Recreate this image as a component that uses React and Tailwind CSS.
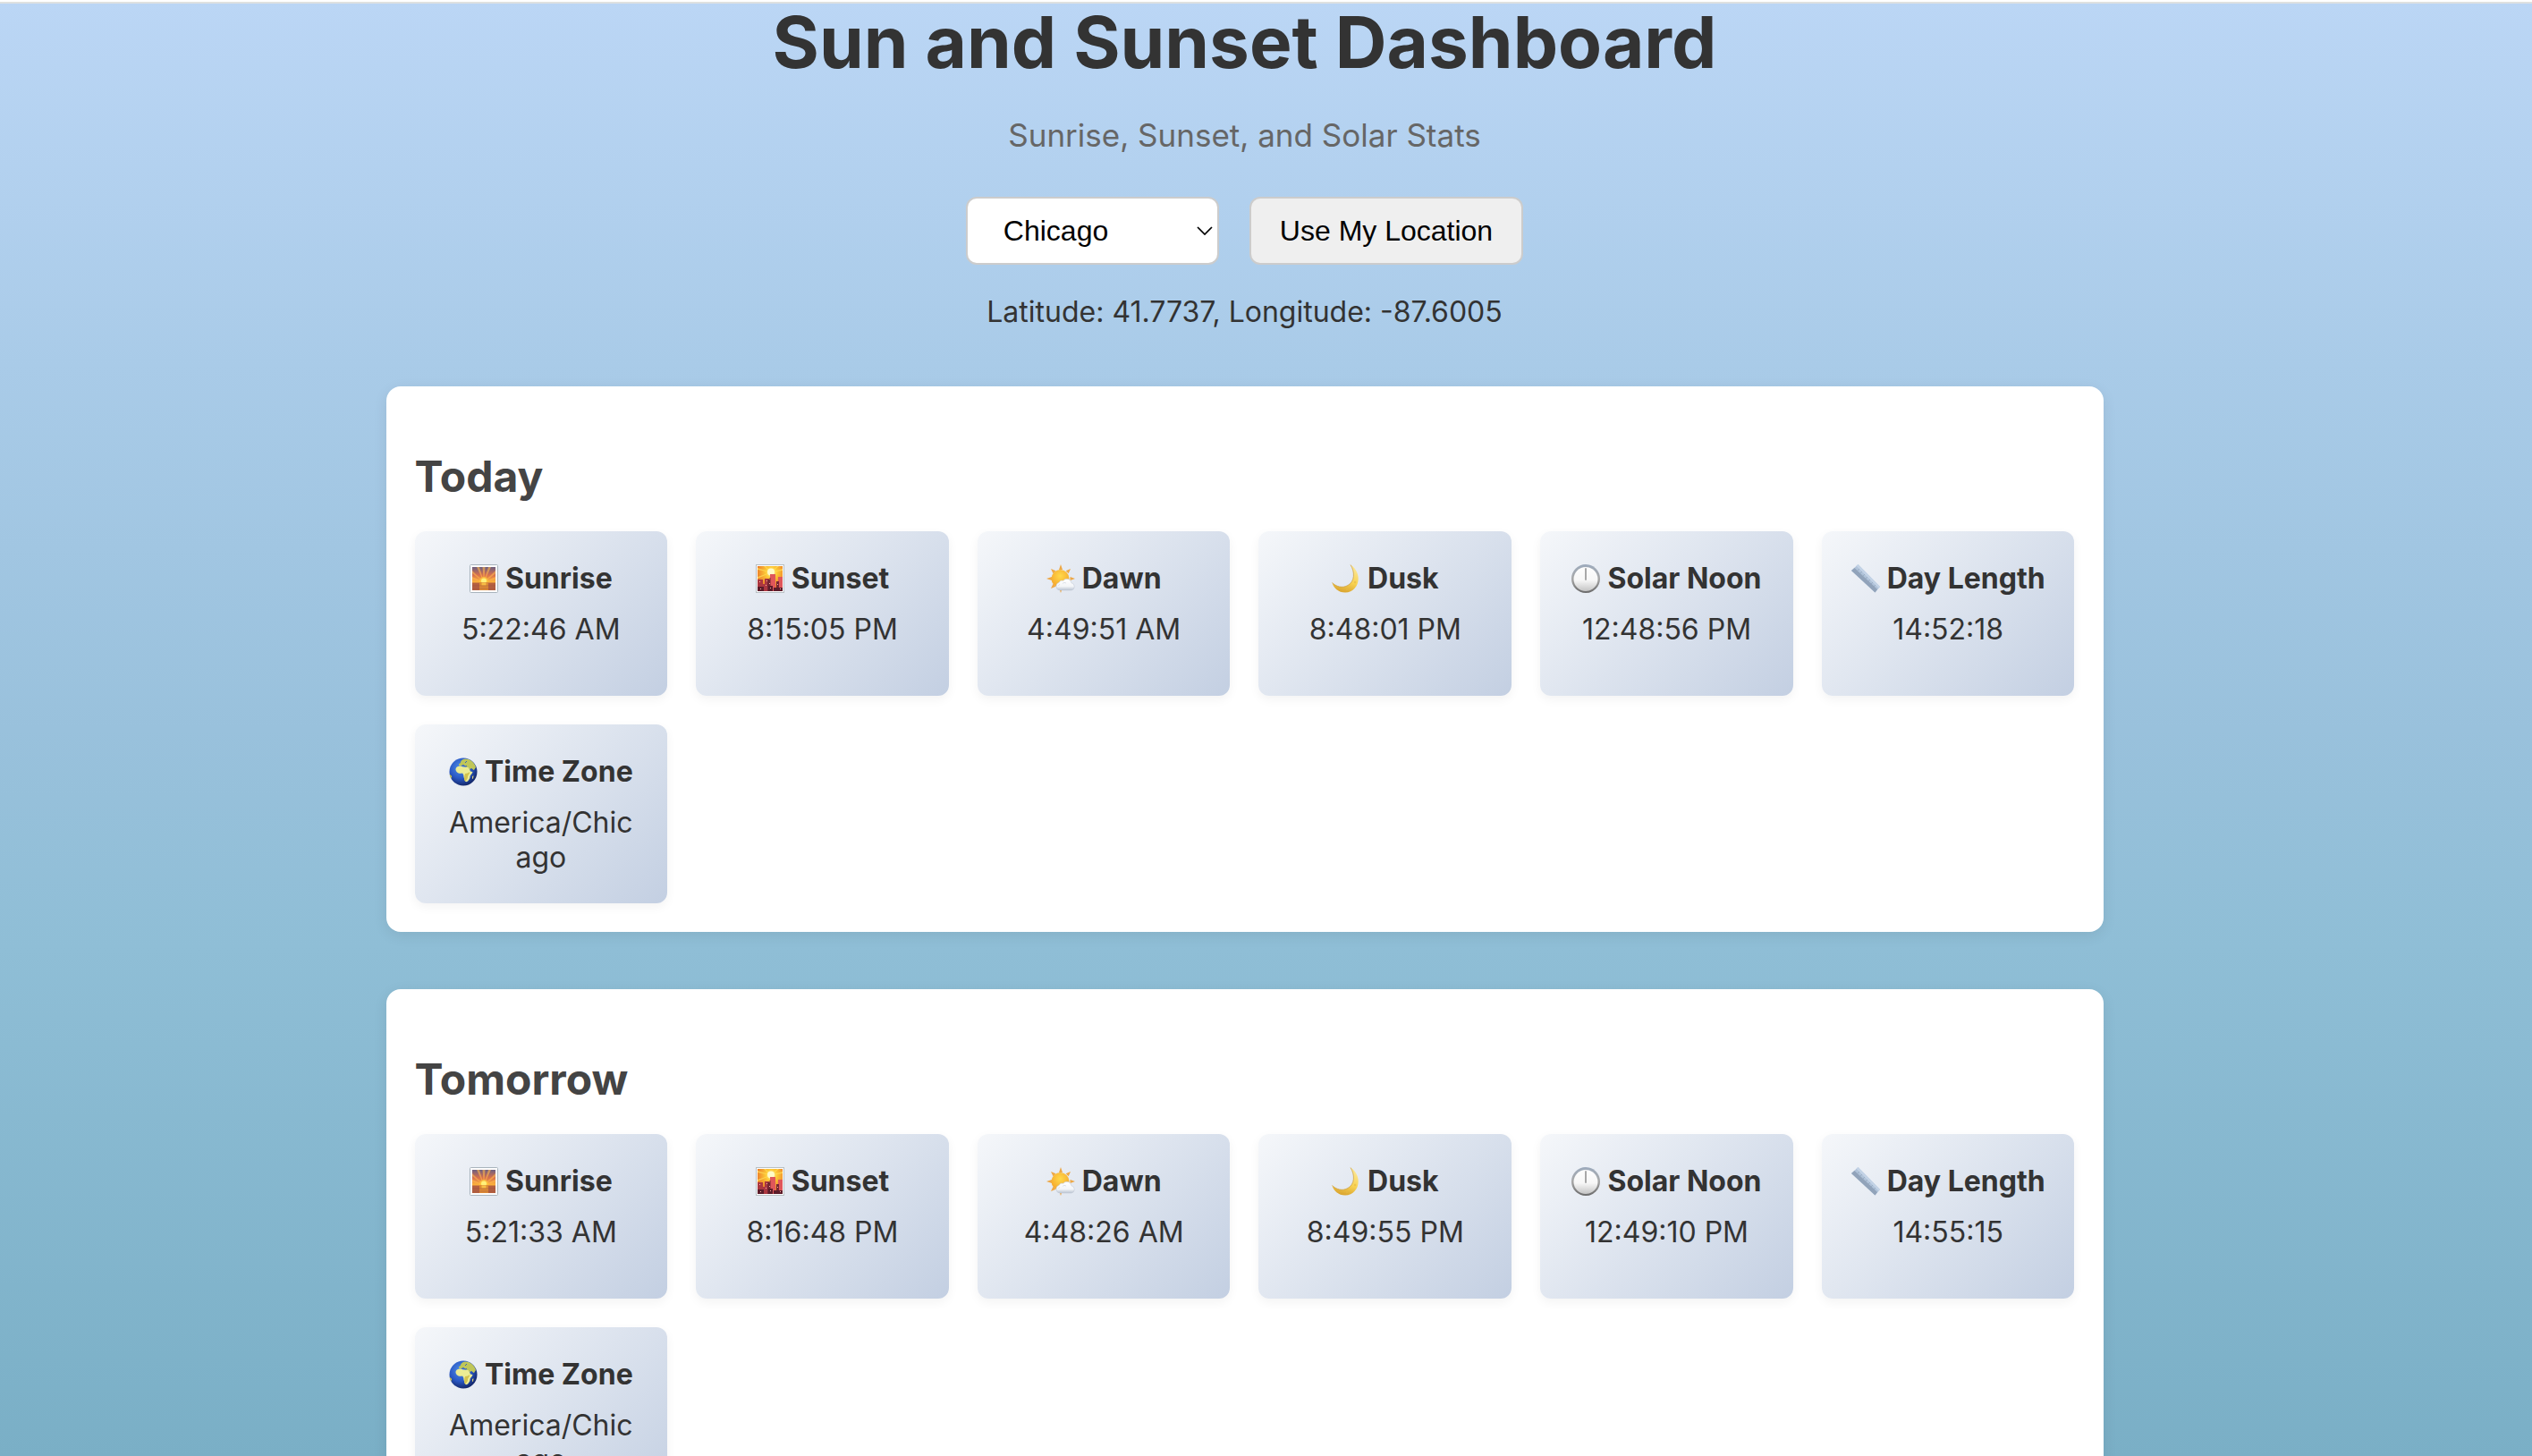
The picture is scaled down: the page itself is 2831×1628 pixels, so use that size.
import { useId } from "react";

function SunriseIcon() {
  const id = useId();
  return (
    <svg viewBox="0 0 32 32" className="size-8 shrink-0" aria-hidden="true">
      <defs>
        <linearGradient id={id} x1="0" y1="0" x2="0" y2="1">
          <stop offset="0" stopColor="#6d5f80" />
          <stop offset="0.35" stopColor="#d9704c" />
          <stop offset="0.62" stopColor="#fbb03c" />
        </linearGradient>
      </defs>
      <rect x="0.5" y="0.5" width="31" height="31" rx="1" fill="#fdfdfd" stroke="#a9b4bd" />
      <rect x="3" y="3" width="26" height="26" fill={`url(#${id})`} />
      <path d="M16 20 3 7v3zM16 20 8 3h3zM16 20 14.500 3h3zM16 20 21 3h3zM16 20 29 7v3.500zM16 20 3 14v2.500zM16 20 29 14v2.500z" fill="#ffb74d" opacity="0.6" />
      <circle cx="16" cy="19" r="5" fill="#ffc93d" opacity="0.7" />
      <circle cx="16" cy="18.500" r="3" fill="#fff07a" />
      <rect x="3" y="20.500" width="26" height="8.500" fill="#b5603f" />
      <rect x="11" y="20.500" width="10" height="8.500" fill="#dd8a35" />
      <rect x="13.500" y="20.500" width="5" height="3" fill="#f7bd45" />
      <path d="M3 24h26M3 27h26" stroke="#8f4b46" strokeWidth="0.700" opacity="0.5" />
    </svg>
  );
}

function SunsetIcon() {
  const id = useId();
  return (
    <svg viewBox="0 0 32 32" className="size-8 shrink-0" aria-hidden="true">
      <defs>
        <radialGradient id={id} cx="0.55" cy="0.25" r="0.75">
          <stop offset="0" stopColor="#fff9b0" />
          <stop offset="0.3" stopColor="#fdc936" />
          <stop offset="1" stopColor="#e35a24" />
        </radialGradient>
      </defs>
      <rect x="0.5" y="0.5" width="31" height="31" fill="#fdfdfd" stroke="#b8c0c4" />
      <rect x="2" y="2" width="28" height="28" fill={`url(#${id})`} />
      <path d="m17 9-15-5v2zM17 9 9 2h2zM17 9l7-7h2zM17 9l13-4v2zM17 9 2 14v2z" fill="#ffe15a" opacity="0.7" />
      <circle cx="17" cy="8.500" r="4" fill="#fffbc8" />
      <path d="M16 30V11h6v19zM25 30V14h5v16z" fill="#e0575a" />
      <path d="M2 30V17h6v5h2v-6h5v14z" fill="#ab3740" />
      <path d="M13 30V17h2.500v-2h1v15zM23 30V19h3v11z" fill="#762633" />
      <path d="M2 25h7v5H2zM14 24h5v6h-5zM20 26h10v4H20z" fill="#5c1c2a" />
      <path d="M4 19h1v1H4zM12 18h1v1h-1zM5 27h1v1H5zM15 21h1v1h-1zM16 26h1v1h-1zM24 22h1v1h-1zM27 27h1v1h-1zM11 23h1v1h-1z" fill="#f9b1a0" />
    </svg>
  );
}

function DawnIcon() {
  const id = useId();
  return (
    <svg viewBox="0 0 32 32" className="size-8 shrink-0" aria-hidden="true">
      <defs>
        <radialGradient id={id + "s"} cx="0.5" cy="0.35" r="0.65">
          <stop offset="0" stopColor="#ffd94a" />
          <stop offset="1" stopColor="#f5a52a" />
        </radialGradient>
        <linearGradient id={id + "c"} x1="0" y1="0" x2="0" y2="1">
          <stop offset="0" stopColor="#ffffff" />
          <stop offset="0.65" stopColor="#f3f5f8" />
          <stop offset="1" stopColor="#b9c3d1" />
        </linearGradient>
      </defs>
      <path
        d="m16 0 2 6h-4zM5 5l5.500 2.300-3 3zM0 16l6-2v4zM5 27l2.500-5.300 3 3zM27 5l-2.300 5.300-3-3zM32 16l-5.500 2v-4zM16 32l-2-6h4z"
        fill="#eda847"
      />
      <circle cx="15.500" cy="16" r="10" fill={`url(#${id}s)`} />
      <path d="M15 29a4.500 4.500 0 0 1-.8-8.800 3.700 3.700 0 0 1 4.600-2 5.200 5.200 0 0 1 9.200 2.600A4.200 4.200 0 0 1 28 29z" fill={`url(#${id}c)`} stroke="#c3cbd6" strokeWidth="0.600" />
      <path d="M18 21.500a3 3 0 0 1 4-.5M13 24a3 3 0 0 1 2-1.500" fill="none" stroke="#d4dae3" strokeWidth="0.800" />
    </svg>
  );
}

function DuskIcon() {
  const id = useId();
  return (
    <svg viewBox="0 0 32 32" className="size-8 shrink-0" aria-hidden="true">
      <defs>
        <linearGradient id={id} x1="0.8" y1="0.2" x2="0.6" y2="1">
          <stop offset="0" stopColor="#fbe38a" />
          <stop offset="0.55" stopColor="#f8d252" />
          <stop offset="1" stopColor="#dca832" />
        </linearGradient>
      </defs>
      <path d="M21 0.500c15 10 9 31-6 31C7.500 31.500 2 26.500 .5 20.500 5 25 12 27 18 23.500c8-4.500 8-15 3-23z" fill={`url(#${id})`} />
      <path d="M.5 20.500C5 25 12 27 18 23.500c8-4.500 8-15 3-23" fill="none" stroke="#c99b3b" strokeWidth="0.700" />
      <circle cx="26" cy="20" r="1.200" fill="#e6b843" opacity="0.6" />
      <circle cx="17" cy="28" r="1.200" fill="#e6b843" opacity="0.6" />
    </svg>
  );
}

function NoonIcon() {
  const id = useId();
  return (
    <svg viewBox="0 0 32 32" className="size-8 shrink-0" aria-hidden="true">
      <defs>
        <linearGradient id={id + "r"} x1="0" y1="0" x2="0" y2="1">
          <stop offset="0" stopColor="#9dabbd" />
          <stop offset="0.5" stopColor="#a8a8a8" />
          <stop offset="1" stopColor="#6a6a6a" />
        </linearGradient>
        <linearGradient id={id + "f"} x1="0" y1="0" x2="0" y2="1">
          <stop offset="0" stopColor="#fdfdfd" />
          <stop offset="0.55" stopColor="#f7f7f7" />
          <stop offset="1" stopColor="#c4c4c4" />
        </linearGradient>
      </defs>
      <circle cx="16" cy="16" r="16" fill={`url(#${id}r)`} />
      <circle cx="16" cy="16.500" r="13.500" fill={`url(#${id}f)`} />
      <path d="M16 5v12" stroke="#a8a8a8" strokeWidth="2" strokeLinecap="round" />
    </svg>
  );
}

function LengthIcon() {
  return (
    <svg viewBox="0 0 32 32" className="size-8 shrink-0" aria-hidden="true">
      <path d="M7.500 0 32 25l-5.500 6.500L0 7z" fill="#b0c3d9" />
      <path d="M3.500 4 0 7l26.500 24.500 2.500-3.500z" fill="#91a3ba" />
      <path d="M7.500 0 32 25l-1.500 1.800L5.500 1.800z" fill="#c3d3e6" />
      <path d="m9 5-2 2M12 8l-2 2M15 11l-2 2M18 14l-2 2M21 17l-2 2M24 20l-2 2M27 23l-2 2" stroke="#8a9db5" strokeWidth="0.600" />
    </svg>
  );
}

function ZoneIcon() {
  const id = useId();
  return (
    <svg viewBox="0 0 32 32" className="size-8 shrink-0" aria-hidden="true">
      <defs>
        <radialGradient id={id + "o"} cx="0.4" cy="0.35" r="0.65">
          <stop offset="0" stopColor="#4f8fe8" />
          <stop offset="0.6" stopColor="#2a58c4" />
          <stop offset="1" stopColor="#152a6e" />
        </radialGradient>
        <clipPath id={id + "c"}>
          <circle cx="16" cy="16" r="15.500" />
        </clipPath>
      </defs>
      <circle cx="16" cy="16" r="15.500" fill={`url(#${id}o)`} />
      <g clipPath={`url(#${id}c)`}>
        <path d="M8 11.500c1-1.500 3-2 5-2 1.500-.3 2 1 3.500 1 2 .3 4-.3 5.500.2l2 4.800 2.500.5c-.5 2-2.500 3.500-3 5 .3 2-.8 3-1.700 4.500-.8 1.300-2.300 2-3.300 1.500-1.200-1.500-1-3.500-2-5 0-2-.3-3-1.500-4.500-2 .3-4.500.5-6-1S7 13 8 11.500z" fill="#ecec94" />
        <path d="M18 18c2 0 4-1 5-2 .5 2-1.500 3.500-2 5 .3 2-.8 3-1.700 4.500-.5.700-1.300 1-1.800.500-.5-2-.5-5 .5-8z" fill="#d3c34e" />
        <path d="M11 8.500c-.5-1.500 1-2 2-2.500-.5-1 1-2.500 2-3.500 3-2 8-1 11 2 2 2 3.500 4 4 6.500l-2 3c-1 0-2-2-3.500-2l-1 1.500-2-2.500-3.500-1-1-1.500-2 .5-2 .2z" fill="#bfc658" />
        <path d="m14 9.500 2-1 2 1.500 2-.5M18 6l2-2" fill="none" stroke="#2a58c4" strokeWidth="0.900" />
        <path d="M0 19c1.500 0 3 1 3 2.500L1.500 25 0 24z" fill="#d9cf3e" />
        <path d="m26 21 1.500-.8-.5 3.300-1 .5z" fill="#ddd07a" />
      </g>
    </svg>
  );
}

const stats = [
  { key: "sunrise", label: "Sunrise", Icon: SunriseIcon },
  { key: "sunset", label: "Sunset", Icon: SunsetIcon },
  { key: "dawn", label: "Dawn", Icon: DawnIcon },
  { key: "dusk", label: "Dusk", Icon: DuskIcon },
  { key: "noon", label: "Solar Noon", Icon: NoonIcon },
  { key: "length", label: "Day Length", Icon: LengthIcon },
  { key: "zone", label: "Time Zone", Icon: ZoneIcon },
];

const days = [
  {
    title: "Today",
    values: {
      sunrise: "5:22:46 AM",
      sunset: "8:15:05 PM",
      dawn: "4:49:51 AM",
      dusk: "8:48:01 PM",
      noon: "12:48:56 PM",
      length: "14:52:18",
      zone: "America/Chicago",
    },
  },
  {
    title: "Tomorrow",
    values: {
      sunrise: "5:21:33 AM",
      sunset: "8:16:48 PM",
      dawn: "4:48:26 AM",
      dusk: "8:49:55 PM",
      noon: "12:49:10 PM",
      length: "14:55:15",
      zone: "America/Chicago",
    },
  },
];

function StatCard({ label, Icon, value }) {
  return (
    <div className="min-h-[184px] rounded-xl bg-[linear-gradient(135deg,#f5f7fa,#c3cfe2)] p-8 text-center shadow-[0_4px_12px_rgba(0,0,0,0.05)]">
      <h3 className="flex items-center justify-center gap-2 leading-[42px] font-bold whitespace-nowrap">
        <Icon />
        {label}
      </h3>
      <p className="mt-4 break-all">{value}</p>
    </div>
  );
}

function DaySection({ title, values }) {
  return (
    <section className="rounded-2xl bg-white p-8 shadow-[0_4px_16px_rgba(0,0,0,0.08)]">
      <h2 className="mt-10 mb-8 text-[48px] leading-[58px] font-bold text-[#444]">{title}</h2>
      <div className="grid grid-cols-6 gap-8">
        {stats.map(({ key, label, Icon }) => (
          <StatCard key={key} label={label} Icon={Icon} value={values[key]} />
        ))}
      </div>
    </section>
  );
}

export default function App() {
  return (
    <div className="h-screen overflow-hidden border-t-2 border-white bg-[linear-gradient(to_bottom,#bbd6f5,#a9cbe8_25%,#99c1dc_50%,#8fbed6_65%,#7aafc6)] font-[Inter,sans-serif] text-[32px] leading-[39px] text-[#333]">
      <div className="border-t-2 border-[#dfe1e0] pr-12">
        <header className="flex flex-col items-center text-center">
          <h1 className="text-[80px] leading-[86px] font-bold">Sun and Sunset Dashboard</h1>
          <p className="mt-10 text-[35px] leading-[42px] text-[#666]">Sunrise, Sunset, and Solar Stats</p>
          <div className="mt-12 flex gap-[34px] font-['Liberation_Sans',Arial,sans-serif] text-black">
            <div className="relative">
              <select
                aria-label="City"
                defaultValue="Chicago"
                className="h-[76px] w-[283px] appearance-none rounded-xl border-2 border-[#ccc] bg-white pl-10"
              >
                <option>Chicago</option>
                <option>New York</option>
                <option>Los Angeles</option>
              </select>
              <svg viewBox="0 0 18 10" className="pointer-events-none absolute top-[33px] right-[7px] h-[10px] w-[18px]" aria-hidden="true">
                <path d="m1 1 8 8 8-8" fill="none" stroke="#000" strokeWidth="1.700" />
              </svg>
            </div>
            <button type="button" className="h-[76px] rounded-xl border-2 border-[#ccc] bg-[#efefef] px-8">
              Use My Location
            </button>
          </div>
          <p className="mt-[33px]">Latitude: 41.7737, Longitude: -87.6005</p>
        </header>
        <main className="mx-auto mt-16 flex max-w-[1920px] flex-col gap-16">
          {days.map((day) => (
            <DaySection key={day.title} title={day.title} values={day.values} />
          ))}
        </main>
      </div>
    </div>
  );
}
